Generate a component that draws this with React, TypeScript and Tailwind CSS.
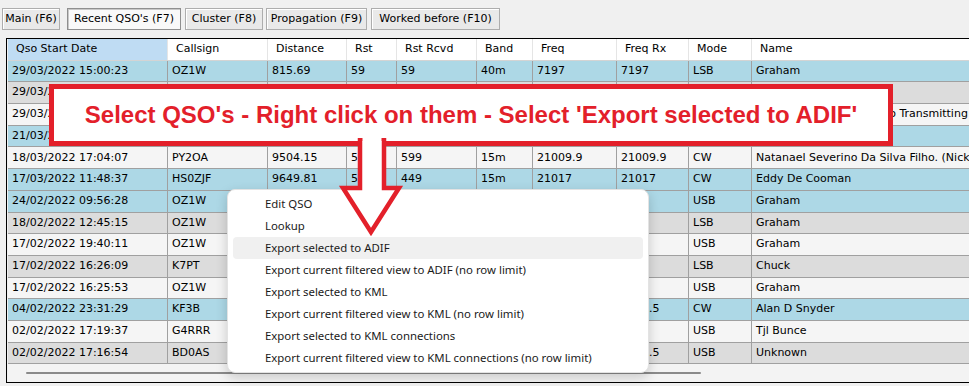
import React from 'react';

type Row = {
    date: string;
    call: string;
    dist: string;
    rst: string;
    rcvd: string;
    band: string;
    freq: string;
    freqRx: string;
    mode: string;
    name: string;
    bg: string;
};

const BLUE = 'bg-[#add8e6]';
const GRAY = 'bg-[#dcdcdc]';
const LIGHT = 'bg-[#f5f5f5]';

const rows: Row[] = [
    { date: '29/03/2022 15:00:23', call: 'OZ1W', dist: '815.69', rst: '59', rcvd: '59', band: '40m', freq: '7197', freqRx: '7197', mode: 'LSB', name: 'Graham', bg: BLUE },
    { date: '29/03/2022 14:41:02', call: 'OZ1W', dist: '815.69', rst: '59', rcvd: '59', band: '40m', freq: '7185', freqRx: '7185', mode: 'LSB', name: 'Graham', bg: GRAY },
    { date: '29/03/2022 10:12:45', call: 'GB2RS', dist: '120.44', rst: '59', rcvd: '57', band: '40m', freq: '7150', freqRx: '7150', mode: 'LSB', name: 'Waterford Amateur Radio Transmitting Group', bg: LIGHT },
    { date: '21/03/2022 18:22:10', call: 'OZ1W', dist: '815.69', rst: '59', rcvd: '59', band: '40m', freq: '7197', freqRx: '7197', mode: 'LSB', name: 'Graham', bg: BLUE },
    { date: '18/03/2022 17:04:07', call: 'PY2OA', dist: '9504.15', rst: '599', rcvd: '599', band: '15m', freq: '21009.9', freqRx: '21009.9', mode: 'CW', name: 'Natanael Severino Da Silva Filho. (Nickname Nata)', bg: LIGHT },
    { date: '17/03/2022 11:48:37', call: 'HS0ZJF', dist: '9649.81', rst: '599', rcvd: '449', band: '15m', freq: '21017', freqRx: '21017', mode: 'CW', name: 'Eddy De Cooman', bg: BLUE },
    { date: '24/02/2022 09:56:28', call: 'OZ1W', dist: '815.69', rst: '59', rcvd: '59', band: '40m', freq: '7105', freqRx: '7105', mode: 'USB', name: 'Graham', bg: BLUE },
    { date: '18/02/2022 12:45:15', call: 'OZ1W', dist: '815.69', rst: '59', rcvd: '59', band: '40m', freq: '7185', freqRx: '7185', mode: 'LSB', name: 'Graham', bg: GRAY },
    { date: '17/02/2022 19:40:11', call: 'OZ1W', dist: '815.69', rst: '59', rcvd: '59', band: '40m', freq: '7105', freqRx: '7105', mode: 'USB', name: 'Graham', bg: LIGHT },
    { date: '17/02/2022 16:26:09', call: 'K7PT', dist: '7612.30', rst: '57', rcvd: '55', band: '40m', freq: '7190', freqRx: '7190', mode: 'LSB', name: 'Chuck', bg: GRAY },
    { date: '17/02/2022 16:25:53', call: 'OZ1W', dist: '815.69', rst: '59', rcvd: '59', band: '40m', freq: '7105', freqRx: '7105', mode: 'USB', name: 'Graham', bg: LIGHT },
    { date: '04/02/2022 23:31:29', call: 'KF3B', dist: '5733.12', rst: '599', rcvd: '579', band: '40m', freq: '7025.5', freqRx: '7025.5', mode: 'CW', name: 'Alan D Snyder', bg: BLUE },
    { date: '02/02/2022 17:19:37', call: 'G4RRR', dist: '102.87', rst: '59', rcvd: '59', band: '40m', freq: '7155', freqRx: '7155', mode: 'USB', name: 'Tjl Bunce', bg: LIGHT },
    { date: '02/02/2022 17:16:54', call: 'BD0AS', dist: '8120.06', rst: '55', rcvd: '55', band: '40m', freq: '7185.5', freqRx: '7185.5', mode: 'USB', name: 'Unknown', bg: GRAY },
];

const columns = [
    { label: 'Qso Start Date', w: 'w-[160px]' },
    { label: 'Callsign', w: 'w-[100px]' },
    { label: 'Distance', w: 'w-[79px]' },
    { label: 'Rst', w: 'w-[50px]' },
    { label: 'Rst Rcvd', w: 'w-[80px]' },
    { label: 'Band', w: 'w-[56px]' },
    { label: 'Freq', w: 'w-[84px]' },
    { label: 'Freq Rx', w: 'w-[72px]' },
    { label: 'Mode', w: 'w-[63px]' },
    { label: 'Name', w: 'w-[300px]' },
];

const tabs = [
    { label: 'Main (F6)', cls: 'ml-[2px] w-[58px]', active: false },
    { label: "Recent QSO's (F7)", cls: 'ml-[7px] w-[114px]', active: true },
    { label: 'Cluster (F8)', cls: 'ml-[4px] w-[78px]', active: false },
    { label: 'Propagation (F9)', cls: 'ml-[3px] w-[101px]', active: false },
    { label: 'Worked before (F10)', cls: 'ml-[4px] w-[129px]', active: false },
];

const menuItems = [
    'Edit QSO',
    'Lookup',
    'Export selected to ADIF',
    'Export current filtered view to ADIF (no row limit)',
    'Export selected to KML',
    'Export current filtered view to KML (no row limit)',
    'Export selected to KML connections',
    'Export current filtered view to KML connections (no row limit)',
];

export default function App() {
    return (
        <div className="relative w-[969px] h-[386px] overflow-hidden bg-[#f0f0f0] text-black font-['DejaVu_Sans',sans-serif] text-[11px]">
            {/* tab buttons */}
            <div className="flex pt-[8px] h-[30px]">
                {tabs.map((t) => (
                    <div
                        key={t.label}
                        className={
                            t.active
                                ? `${t.cls} h-[22px] flex items-center justify-center border border-[#8f8f8f] bg-[#f9f9f9] shadow-[inset_1px_1px_0_#c8c8c8]`
                                : `${t.cls} h-[22px] flex items-center justify-center border border-[#adadad] bg-[#e9e9e9] shadow-[inset_1px_1px_0_#ffffff]`
                        }
                    >
                        {t.label}
                    </div>
                ))}
            </div>

            {/* grid */}
            <div className="mt-[8px] ml-[6px] w-[1000px] h-[345px] border-l border-t border-b border-black pl-[1px] flex flex-col">
                <div className="flex h-[21.7px] bg-white border-b border-[#d4d4d4] shrink-0">
                    {columns.map((c, i) => (
                        <div
                            key={c.label}
                            className={`${c.w} shrink-0 flex items-center pl-[8px] border-r border-[#e5e5e5] ${i === 0 ? 'bg-[#bfdcf3]' : ''}`}
                        >
                            {c.label}
                        </div>
                    ))}
                </div>
                {rows.map((r, idx) => {
                    const cells = [r.date, r.call, r.dist, r.rst, r.rcvd, r.band, r.freq, r.freqRx, r.mode, r.name];
                    return (
                        <div key={idx} className={`flex h-[21.7px] shrink-0 border-b border-[#a0a0a0] ${r.bg}`}>
                            {cells.map((v, i) => (
                                <div
                                    key={i}
                                    className={`${columns[i].w} shrink-0 flex items-center pl-[4px] border-r border-[#a0a0a0] whitespace-nowrap overflow-hidden`}
                                >
                                    {v}
                                </div>
                            ))}
                        </div>
                    );
                })}
                <div className="flex-1 flex items-center pl-[18px] bg-[#f3f3f3]">
                    <div className="w-[675px] h-[2px] rounded-full bg-[#8a8a8a]" />
                </div>
            </div>

            {/* context menu */}
            <div className="absolute left-[227px] top-[189px] w-[422px] px-[5px] py-[3px] bg-white rounded-[8px] border border-[#e3e3e3] shadow-[0_4px_12px_rgba(0,0,0,0.18)] font-['Noto_Sans',sans-serif] text-[11.4px] text-[#1a1a1a]">
                {menuItems.map((m, i) => (
                    <div
                        key={m}
                        className={`h-[22px] flex items-center pl-[32px] rounded-[4px] whitespace-nowrap ${i === 2 ? 'bg-[#f0f0f0]' : ''}`}
                    >
                        {m}
                    </div>
                ))}
            </div>

            {/* annotation banner */}
            <div className="absolute left-[49px] top-[84px] w-[844px] h-[62px] border-[5px] border-[#e3202a] bg-white flex items-center justify-center">
                <span className="font-['Liberation_Sans',Arial,sans-serif] font-bold text-[24px] text-[#e3202a] whitespace-nowrap">
                    Select QSO's - Right click on them - Select 'Export selected to ADIF'
                </span>
            </div>

            {/* arrow */}
            <svg className="absolute left-[336px] top-[138px]" width="70" height="102" viewBox="336 138 70 102">
                <polygon
                    points="360,139 360,188 343,188 371,232 399,188 384,188 384,139"
                    fill="#ffffff"
                    stroke="#e3202a"
                    strokeWidth="4.5"
                    strokeLinejoin="miter"
                />
                <rect x="362.5" y="136" width="19" height="6" fill="#ffffff" />
            </svg>
        </div>
    );
}
